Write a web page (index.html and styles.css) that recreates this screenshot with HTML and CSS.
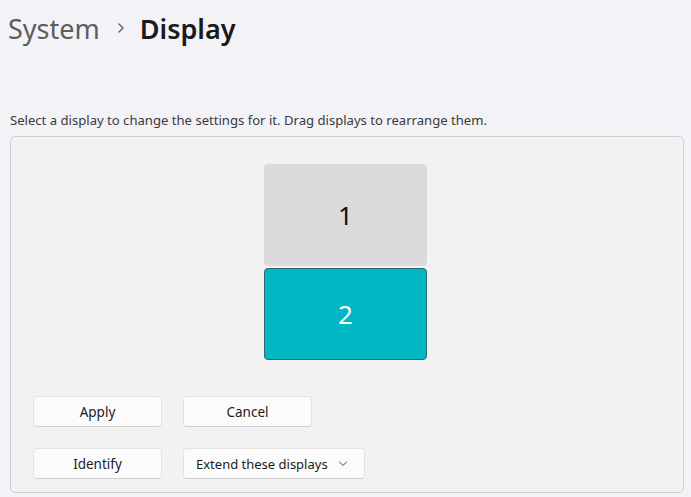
FILE: index.html
```html
<!DOCTYPE html>
<html lang="en">
<head>
<meta charset="UTF-8">
<title>Display</title>
<link rel="stylesheet" href="styles.css">
</head>
<body>

<div class="crumbs">
  <span class="parent">System</span>
  <svg class="sep" width="10" height="12" viewBox="0 0 10 12"><path d="M3 2 L7 6 L3 10" fill="none" stroke="#5c5c5c" stroke-width="1.4" stroke-linecap="round" stroke-linejoin="round"/></svg>
  <span class="current">Display</span>
</div>

<p class="hint">Select a display to change the settings for it. Drag displays to rearrange them.</p>

<div class="panel">
  <div class="screens">
    <div class="screen one">1</div>
    <div class="screen two">2</div>
  </div>

  <div class="row">
    <button class="btn">Apply</button>
    <button class="btn">Cancel</button>
  </div>
  <div class="row">
    <button class="btn">Identify</button>
    <button class="btn drop">Extend these displays
      <svg width="10" height="6" viewBox="0 0 10 6"><path d="M1.5 1 L5 4.5 L8.5 1" fill="none" stroke="#444" stroke-width="1" stroke-linecap="round" stroke-linejoin="round"/></svg>
    </button>
  </div>
</div>

</body>
</html>
```

FILE: styles.css
```css
body { margin: 0; background: #f3f2f7; font-family: "Noto Sans", "Open Sans", sans-serif; color: #1b1b1b; }
.crumbs { display: flex; align-items: center; height: 56px; padding-left: 8px; font-size: 27px; }
.parent { color: #5d5d5d; }
.sep { margin: 0 14px 0 16px; }
.current { font-weight: 600; color: #1a1a1a; }
.hint { margin: 55px 0 0 10px; font-size: 13.1px; color: #3a3a3a; line-height: 18px; }
.panel { margin: 7px 7px 0 10px; height: 357px; box-sizing: border-box; background: #f2f2f2; border: 1px solid #d0d0d0; border-radius: 5px; padding: 27px 0 0 22px; }
.screens { display: flex; flex-direction: column; align-items: center; gap: 2px; margin-left: -25px; margin-bottom: 36px; }
.screen { width: 163px; box-sizing: border-box; display: flex; align-items: center; justify-content: center; font-size: 26px; border-radius: 4px; }
.one { height: 102px; background: #dbdbdb; color: #111; }
.two { height: 92px; background: #00b7c3; color: #fff; border: 1px solid #2a6a70; }
.row { display: flex; gap: 21px; margin-bottom: 21px; }
.btn { width: 129px; height: 31px; background: #fbfbfb; border: 1px solid #e3e3e3; border-bottom-color: #d0d0d0; border-radius: 4px; font-family: inherit; font-size: 13.5px; color: #1b1b1b; padding: 0; }
.drop { width: 182px; display: flex; align-items: center; justify-content: space-between; padding: 0 16px 0 12px; font-size: 13px; }
```
